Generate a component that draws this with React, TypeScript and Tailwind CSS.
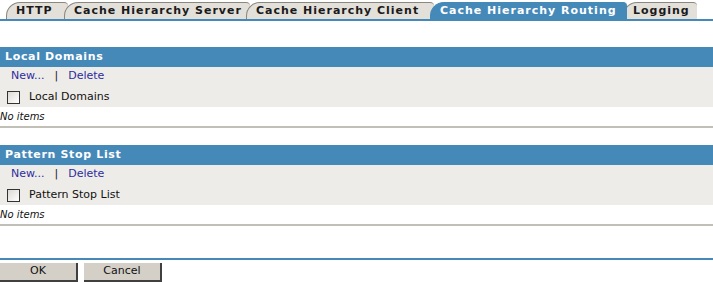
import React from "react";

const tabs = [
  { label: "HTTP", w: 62 },
  { label: "Cache Hierarchy Server", w: 186 },
  { label: "Cache Hierarchy Client", w: 188 },
  { label: "Cache Hierarchy Routing", w: 197, active: true },
  { label: "Logging", w: 74 },
];

function Tab({ label, w, active }: { label: string; w: number; active?: boolean }) {
  return (
    <div
      className={
        "relative -mr-[4px] flex h-[17px] shrink-0 items-center whitespace-nowrap rounded-tl-[14px] rounded-tr-[4px] border-l border-t pl-[9px] text-[11px] font-bold tracking-[0.09em] " +
        (active
          ? "z-10 border-[#4589b9] bg-[#4589b9] text-white"
          : "border-[#8a877f] bg-[#e3e0da] text-[#1a1a1a]")
      }
      style={{ width: w }}
    >
      {label}
    </div>
  );
}

function Section({ title }: { title: string }) {
  return (
    <div className="flex flex-col">
      <div className="flex h-[20px] items-center bg-[#4589b9] pl-[5px] text-[11px] font-bold tracking-[0.06em] text-white">
        {title}
      </div>
      <div className="flex h-[40px] flex-col bg-[#eeece8] text-[11px]">
        <div className="flex h-[18px] items-center gap-[10px] pl-[11px] text-[#2d2da0]">
          <span>New...</span>
          <span className="text-[#222]">|</span>
          <span>Delete</span>
        </div>
        <div className="mt-[2px] flex h-[20px] items-center gap-[9px] pl-[7px] text-[#111]">
          <span className="h-[13px] w-[13px] border border-[#333] bg-gradient-to-br from-[#dcdad4] to-white" />
          <span>{title}</span>
        </div>
      </div>
      <div className="flex h-[19px] items-center bg-white text-[10px] italic text-[#111]">
        No items
      </div>
      <div className="h-[2px] bg-[#c1bfb6]" />
    </div>
  );
}

export default function App() {
  return (
    <div
      className="h-[282px] w-[713px] overflow-hidden bg-white"
      style={{ fontFamily: '"DejaVu Sans", Verdana, sans-serif' }}
    >
      <div className="flex items-end pl-[6px] pt-[2px]">
        {tabs.map((t) => (
          <Tab key={t.label} {...t} />
        ))}
      </div>
      <div className="h-[2px] bg-[#4589b9]" />
      <div className="mt-[26px]">
        <Section title="Local Domains" />
      </div>
      <div className="mt-[17px]">
        <Section title="Pattern Stop List" />
      </div>
      <div className="mt-[32px] h-[2px] bg-[#4589b9]" />
      <div className="mt-[3px] flex gap-[6px] text-[11px] text-[#111]">
        <button className="h-[19px] w-[78px] border-b-2 border-r-2 border-[#404040] bg-[#d4d0c8]">OK</button>
        <button className="h-[19px] w-[78px] border-b-2 border-r-2 border-[#404040] bg-[#d4d0c8]">Cancel</button>
      </div>
    </div>
  );
}
